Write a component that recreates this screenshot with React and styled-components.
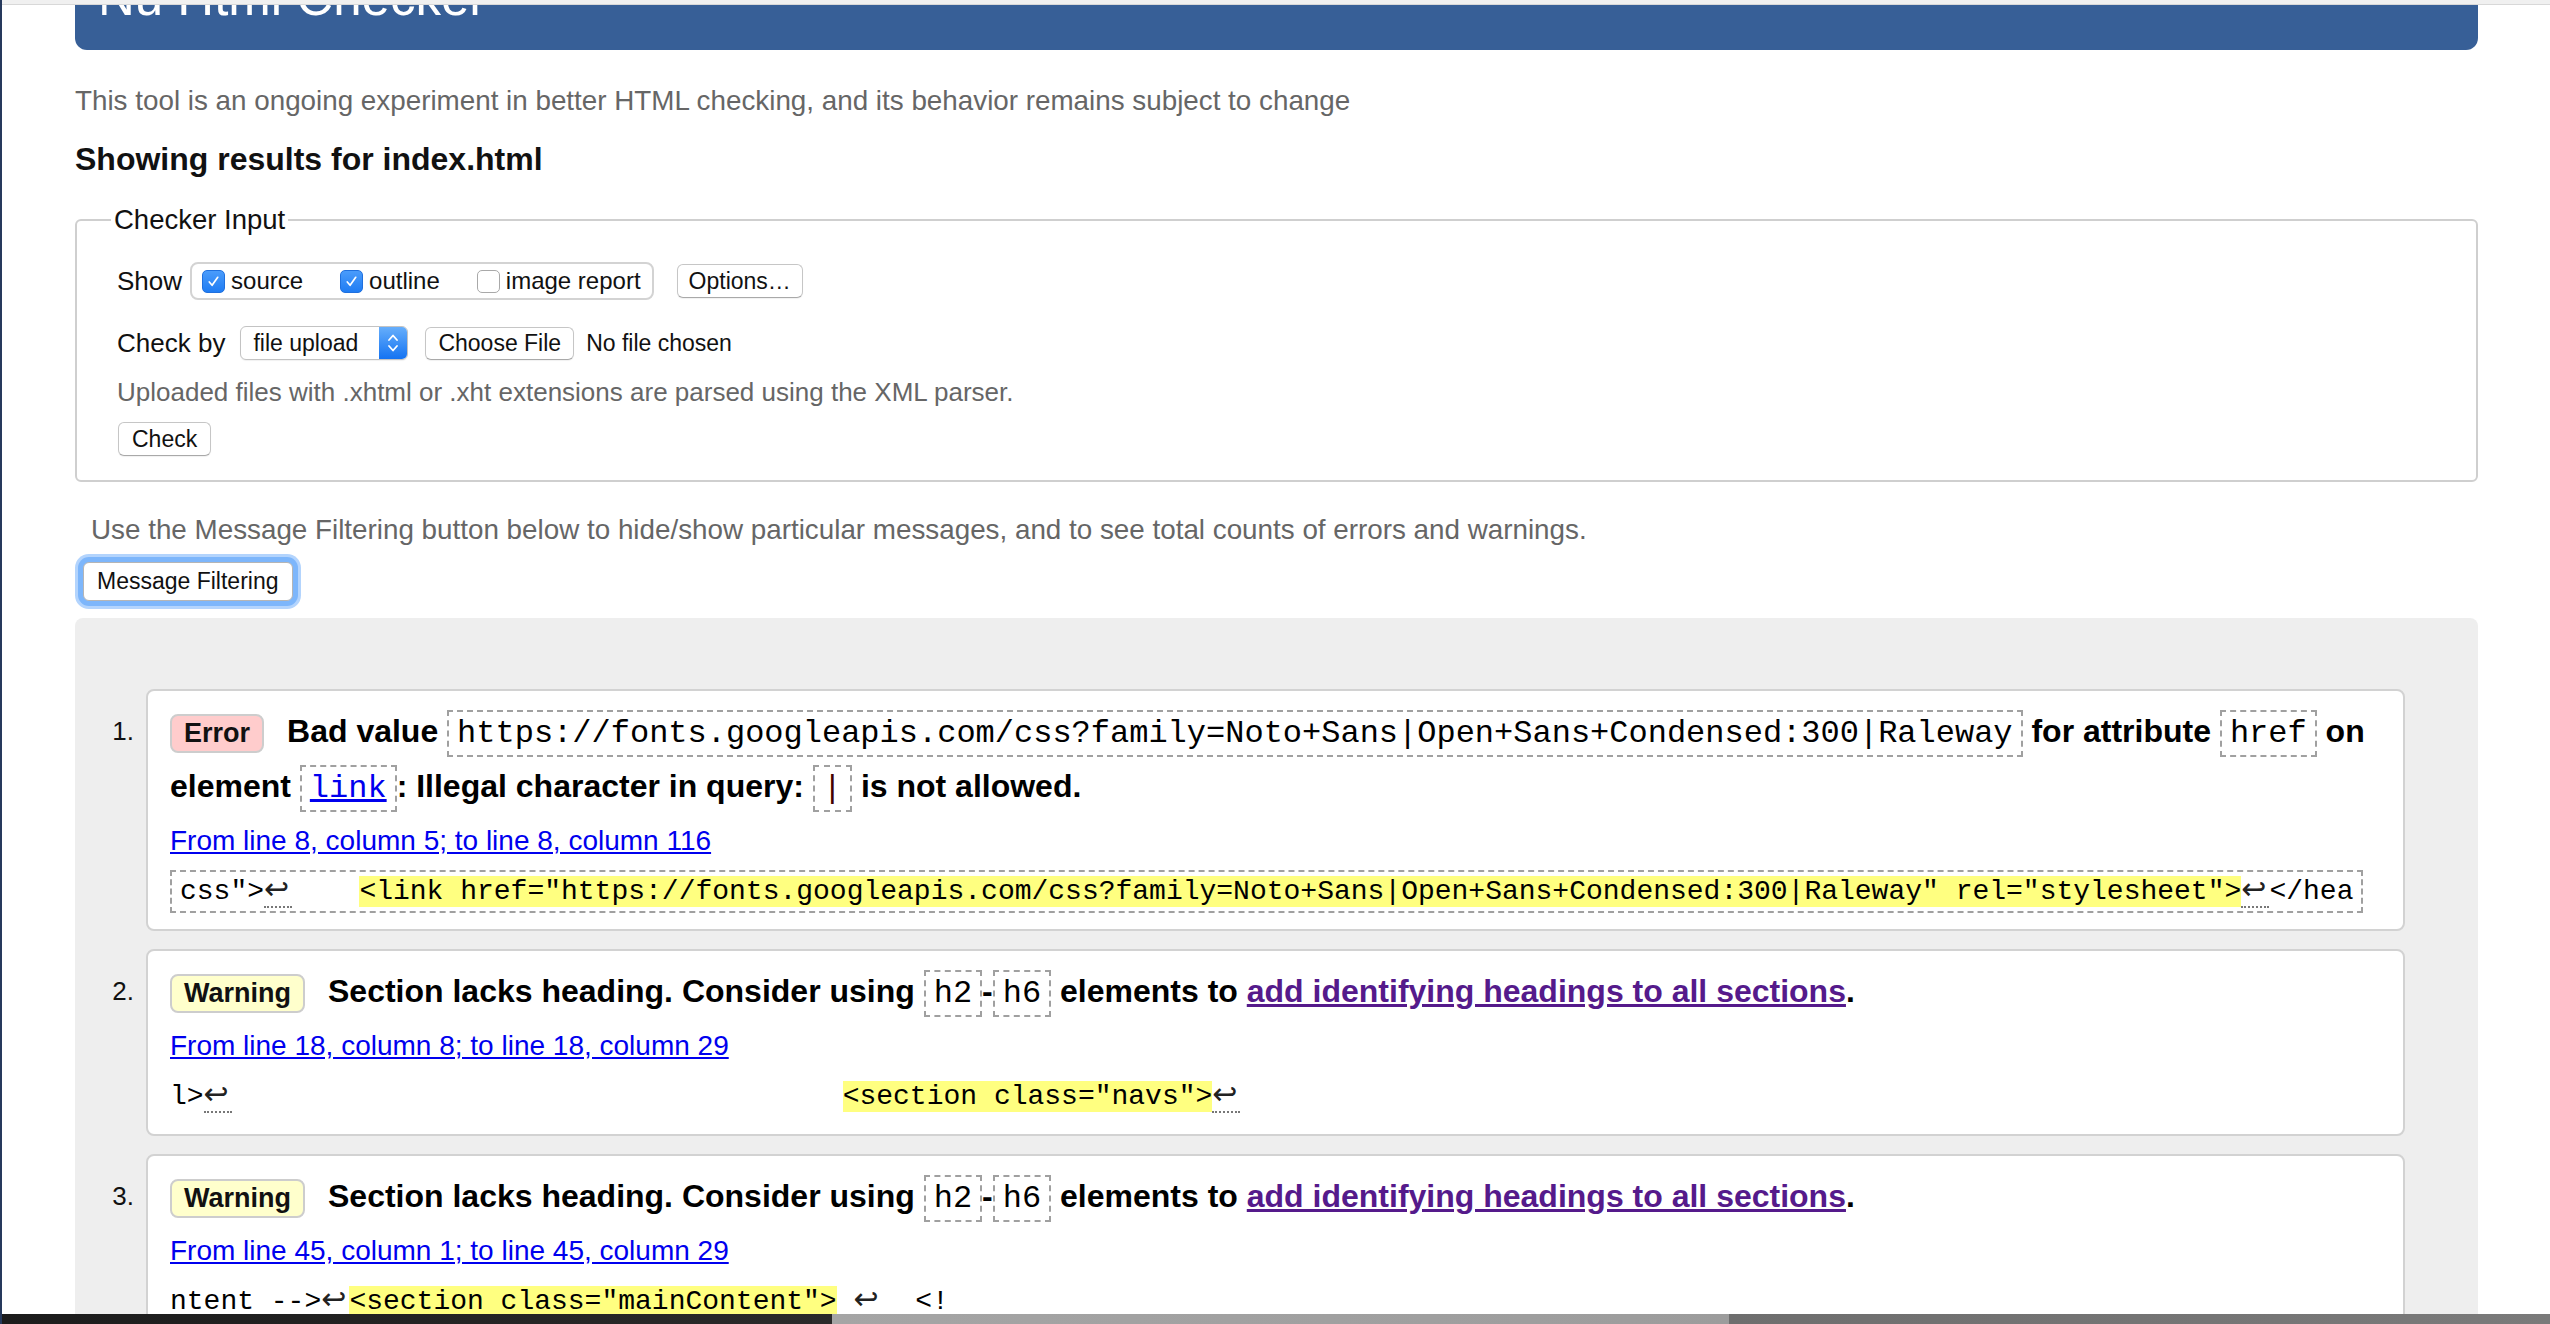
import React from 'react';
import styled, { createGlobalStyle, css } from 'styled-components';

const GlobalStyle = createGlobalStyle`
  html, body { margin: 0; padding: 0; background: #fff; }
  body {
    font-family: "Liberation Sans", Arial, Helvetica, sans-serif;
    color: #000;
    overflow: hidden;
  }
  * { box-sizing: border-box; }
`;

const SANS = `"Liberation Sans", Arial, Helvetica, sans-serif`;
const MONO = `"Liberation Mono", "Courier New", monospace`;

const Page = styled.div`
  position: relative;
  height: 1324px;
  overflow: hidden;
  border-left: 2px solid #26395c;
  padding: 0 72px 0 73px;
`;

const ChromeStrip = styled.div`
  position: absolute;
  top: 0;
  left: 0;
  right: 0;
  height: 5px;
  background: #f0f0f0;
  border-bottom: 1px solid #d8d8d8;
  z-index: 5;
`;

const DockBar = styled.div`
  position: absolute;
  left: 0;
  right: 0;
  bottom: 0;
  height: 10px;
  background: linear-gradient(to right, #1c1c1c 0, #2a2a2a 830px, #a5a5a5 830px, #9c9c9c 1727px, #6e6e6e 1727px, #7a7a7a 100%);
  z-index: 5;
`;

const Header = styled.header`
  margin-top: -70px;
  height: 120px;
  background: #375f97;
  border-radius: 0 0 12px 12px;
  padding: 43px 0 0 23px;
`;

const Title = styled.h1`
  margin: 0;
  font-size: 51px;
  line-height: 50px;
  font-weight: normal;
  color: #fff;
`;

const Intro = styled.p`
  margin: ${p => p.$m || '0'};
  font-size: ${p => p.$fs || 26}px;
  line-height: 32px;
  color: #666;
`;

const ResultsTitle = styled.h2`
  margin: 23px 0 0;
  font-size: 32px;
  line-height: 38px;
  font-weight: bold;
  color: #111;
`;

const Fieldset = styled.fieldset`
  margin: 25px 0 0;
  padding: 25px 20px 24px 40px;
  border: 2px solid #cfcfcf;
  border-radius: 6px;
  min-width: 0;
`;

const Legend = styled.legend`
  font-size: 27.5px;
  line-height: 34px;
  padding: 0 3px;
  margin-left: -6px;
  color: #111;
`;

const ControlRow = styled.div`
  display: flex;
  align-items: center;
  height: ${p => p.$h}px;
  margin-top: ${p => p.$mt || 0}px;
`;

const FieldLabel = styled.span`
  font-size: 26px;
  color: #111;
  margin-right: ${p => p.$mr}px;
`;

const CheckGroup = styled.div`
  display: flex;
  align-items: center;
  gap: 37px;
  height: 38px;
  padding: 0 11px 0 10px;
  border: 2px solid #d3d3d3;
  border-radius: 8px;
`;

const CheckOption = styled.label`
  display: flex;
  align-items: center;
  gap: 6px;
  font-size: 24px;
  color: #111;
`;

const CheckBox = styled.span`
  display: inline-flex;
  align-items: center;
  justify-content: center;
  width: 23px;
  height: 23px;
  border-radius: 5px;
  ${p => p.$checked
    ? css`background: linear-gradient(#4a9cfb, #1f7cf3); border: 1px solid #1f70de;`
    : css`background: #fff; border: 1px solid #a9a9a9;`}
`;

const Button = styled.button`
  display: ${p => (p.$block ? 'block' : 'inline-block')};
  height: ${p => p.$h || 34}px;
  padding: 0 ${p => p.$px || 13}px;
  margin: ${p => p.$m || '0'};
  font-family: ${SANS};
  font-size: 23px;
  line-height: 1;
  color: #111;
  background: #fff;
  border: 1px solid #c6c6c6;
  border-bottom-color: #a9a9a9;
  border-radius: 6px;
  box-shadow: 0 1px 1px rgba(0, 0, 0, 0.06);
  ${p => p.$focused && css`
    box-shadow: 0 0 0 5px #7db6fb, 0 0 0 8px #b3d4fd;
    border-color: #b5b5b5;
  `}
`;

const SelectBox = styled.div`
  display: flex;
  align-items: stretch;
  width: 168px;
  height: 34px;
  border: 1px solid #c3c3c3;
  border-radius: 6px;
  background: #fff;
  box-shadow: 0 1px 1px rgba(0, 0, 0, 0.06);
  overflow: hidden;
`;

const SelectText = styled.span`
  flex: 1;
  display: flex;
  align-items: center;
  padding-left: 12px;
  font-size: 23px;
  color: #111;
`;

const SelectArrow = styled.span`
  width: 28px;
  display: flex;
  align-items: center;
  justify-content: center;
  background: linear-gradient(#66aefb, #1473f2);
`;

const FileStatus = styled.span`
  margin-left: 12px;
  font-size: 23px;
  color: #111;
`;

const Results = styled.div`
  margin-top: 17px;
  background: #eeeeee;
  border-radius: 8px 8px 0 0;
  padding: 71px 73px 0 0;
`;

const ResultList = styled.ol`
  margin: 0;
  padding: 0;
  list-style: none;
`;

const Item = styled.li`
  display: flex;
  margin-bottom: 18px;
`;

const Num = styled.span`
  flex: 0 0 71px;
  text-align: right;
  padding: 15px 12px 0 0;
  font-size: 26px;
  line-height: 55px;
  color: #111;
`;

const Card = styled.div`
  flex: 1;
  min-width: 0;
  background: #fff;
  border: 2px solid #d2d2d2;
  border-radius: 8px;
  padding: 13px 22px 16px 22px;
`;

const Message = styled.p`
  margin: 0;
  font-size: 32px;
  line-height: 55px;
  font-weight: bold;
  color: #000;
`;

const Badge = styled.span`
  display: inline-block;
  font-size: 27px;
  line-height: 35px;
  padding: 0 12px;
  margin-right: 23px;
  border: 2px solid #cdcdcd;
  border-radius: 8px;
  font-weight: bold;
  color: #111;
  background: ${p => (p.$kind === 'error' ? '#ffcccc' : '#ffffcc')};
`;

const Code = styled.code`
  font-family: ${MONO};
  font-size: 32px;
  line-height: 36px;
  font-weight: normal;
  white-space: nowrap;
  padding: 3px 8px;
  border: 2px dashed #a0a0a0;
`;

const CodeLink = styled.a`
  color: #0000ee;
  text-decoration: underline;
`;

const BadChar = styled.span`
  color: #400;
`;

const MsgLink = styled.a`
  color: #551a8b;
  text-decoration: underline;
`;

const Location = styled.p`
  margin: 7px 0 0;
  font-size: 28px;
  line-height: 40px;
`;

const LocLink = styled.a`
  color: #0000ee;
  text-decoration: underline;
`;

const Extract = styled.pre`
  width: fit-content;
  margin: 9px 0 0;
  font-family: ${MONO};
  font-size: 28px;
  line-height: 32px;
  color: #000;
  white-space: pre;
  ${p => p.$boxed
    ? css`padding: 3px 8px; border: 2px dashed #a0a0a0;`
    : css`padding: 5px 0;`}
`;

const Gap = styled.span`
  display: inline-block;
  width: ${p => p.$w}px;
`;

const Mark = styled.mark`
  background: #ffff80;
  color: #000;
`;

const Ret = styled.span`
  font-family: "DejaVu Sans", sans-serif;
  font-size: 30px;
  line-height: 28px;
  letter-spacing: 3px;
  color: #222;
  ${p => !p.$plain && css`border-bottom: 2px dotted #777;`}
`;

function Check() {
  return (
    <svg width="15" height="15" viewBox="0 0 16 16" aria-hidden="true">
      <path d="M3.5 8.5 L6.5 12 L12.5 3.5" fill="none" stroke="#fff" strokeWidth="1.8" strokeLinecap="round" strokeLinejoin="round" />
    </svg>
  );
}

function UpDown() {
  return (
    <svg width="14" height="24" viewBox="0 0 14 24" aria-hidden="true">
      <path d="M3 9 L7 4.5 L11 9" fill="none" stroke="#fff" strokeWidth="1.8" strokeLinecap="round" strokeLinejoin="round" />
      <path d="M3 15 L7 19.5 L11 15" fill="none" stroke="#fff" strokeWidth="1.8" strokeLinecap="round" strokeLinejoin="round" />
    </svg>
  );
}

const Option = ({ checked, children }) => (
  <CheckOption>
    <CheckBox $checked={checked}>{checked && <Check />}</CheckBox>
    {children}
  </CheckOption>
);

export default function App() {
  return (
    <>
      <GlobalStyle />
      <Page>
        <ChromeStrip />
        <Header>
          <Title>Nu Html Checker</Title>
        </Header>
        <Intro $m="35px 0 0" $fs={27.8}>
          This tool is an ongoing experiment in better HTML checking, and its behavior remains subject to change
        </Intro>
        <ResultsTitle>Showing results for index.html</ResultsTitle>

        <Fieldset>
          <Legend>Checker Input</Legend>
          <ControlRow $h={38}>
            <FieldLabel $mr={8}>Show</FieldLabel>
            <CheckGroup>
              <Option checked>source</Option>
              <Option checked>outline</Option>
              <Option>image report</Option>
            </CheckGroup>
            <Button $m="0 0 0 23px" $px={11}>Options…</Button>
          </ControlRow>
          <ControlRow $h={36} $mt={25}>
            <FieldLabel $mr={15}>Check by</FieldLabel>
            <SelectBox>
              <SelectText>file upload</SelectText>
              <SelectArrow><UpDown /></SelectArrow>
            </SelectBox>
            <Button $m="0 0 0 17px" $h={33} $px={12}>Choose File</Button>
            <FileStatus>No file chosen</FileStatus>
          </ControlRow>
          <Intro $m="15px 0 0">Uploaded files with .xhtml or .xht extensions are parsed using the XML parser.</Intro>
          <Button $block $m="14px 0 0 1px">Check</Button>
        </Fieldset>

        <Intro $m="32px 0 0 16px" $fs={27.8}>
          Use the Message Filtering button below to hide/show particular messages, and to see total counts of errors and warnings.
        </Intro>
        <Button $block $focused $h={39} $m="16px 0 0 8px">Message Filtering</Button>

        <Results>
          <ResultList>
            <Item>
              <Num>1.</Num>
              <Card>
                <Message>
                  <Badge $kind="error">Error</Badge>Bad value <Code>https://fonts.googleapis.com/css?family=Noto+Sans|Open+Sans+Condensed:300|Raleway</Code> for attribute <Code>href</Code> on element <Code><CodeLink href="#">link</CodeLink></Code>: Illegal character in query: <Code><BadChar>|</BadChar></Code> is not allowed.
                </Message>
                <Location><LocLink href="#">From line 8, column 5; to line 8, column 116</LocLink></Location>
                <Extract $boxed>{'css">'}<Ret>↩</Ret>{'    '}<Mark>{'<link href="https://fonts.googleapis.com/css?family=Noto+Sans|Open+Sans+Condensed:300|Raleway" rel="stylesheet">'}</Mark><Ret>↩</Ret>{'</hea'}</Extract>
              </Card>
            </Item>
            <Item>
              <Num>2.</Num>
              <Card>
                <Message>
                  <Badge $kind="warning">Warning</Badge>Section lacks heading. Consider using <Code>h2</Code>-<Code>h6</Code> elements to <MsgLink href="#">add identifying headings to all sections</MsgLink>.
                </Message>
                <Location><LocLink href="#">From line 18, column 8; to line 18, column 29</LocLink></Location>
                <Extract>{'l>'}<Ret>↩</Ret>{' '.repeat(36)}<Gap $w={6} /><Mark>{'<section class="navs">'}</Mark><Ret>↩</Ret></Extract>
              </Card>
            </Item>
            <Item>
              <Num>3.</Num>
              <Card>
                <Message>
                  <Badge $kind="warning">Warning</Badge>Section lacks heading. Consider using <Code>h2</Code>-<Code>h6</Code> elements to <MsgLink href="#">add identifying headings to all sections</MsgLink>.
                </Message>
                <Location><LocLink href="#">From line 45, column 1; to line 45, column 29</LocLink></Location>
                <Extract>{'ntent -->'}<Ret $plain>↩</Ret><Mark>{'<section class="mainContent">'}</Mark>{' '}<Ret $plain>↩</Ret>{'  <!'}</Extract>
              </Card>
            </Item>
          </ResultList>
        </Results>
        <DockBar />
      </Page>
    </>
  );
}
